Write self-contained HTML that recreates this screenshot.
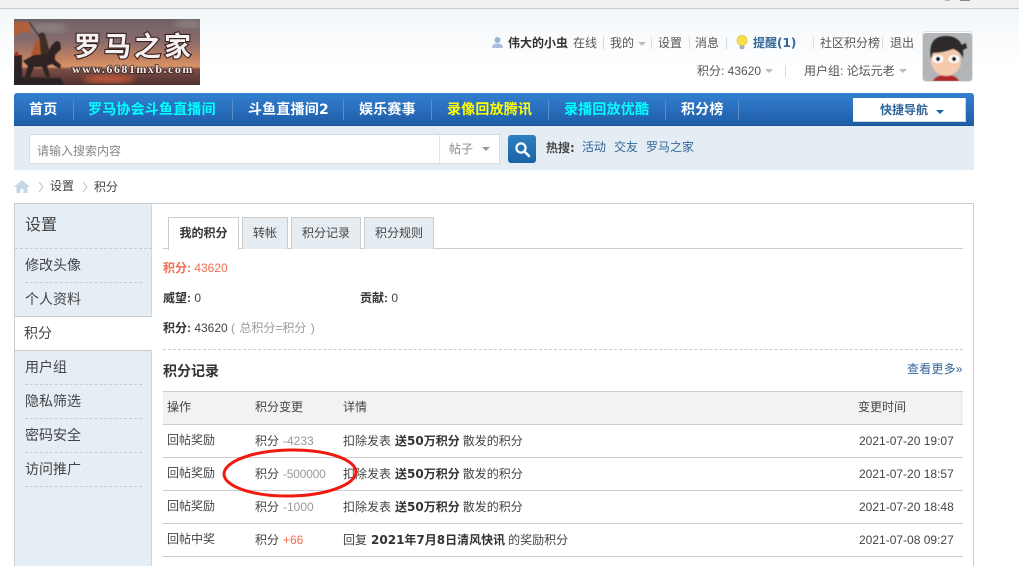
<!DOCTYPE html>
<html lang="zh">
<head>
<meta charset="utf-8">
<title>积分</title>
<style>
html,body{margin:0;padding:0;width:1019px;height:566px;overflow:hidden;background:#fff}
body{font-family:"Liberation Sans","WenQuanYi Zen Hei","Noto Sans CJK SC",sans-serif;font-size:12px;color:#444}
#root{position:relative;width:1019px;height:566px;overflow:hidden}
.a{position:absolute}
.t{position:absolute;white-space:nowrap;line-height:16px}
.n{font-size:14px;font-weight:bold;color:#fff;letter-spacing:.2px;font-family:"DejaVu Sans","WenQuanYi Zen Hei","Noto Sans CJK SC",sans-serif}
.s{font-size:14px;color:#444;left:25px}
.d{position:absolute;border-top:1px dashed #ccc;height:0}
.v{position:absolute;width:1px;height:12px;background:#cfd9e3}
.nv{position:absolute;top:100px;width:1px;height:20px;background:#5b8fca}
.tab{position:absolute;top:217px;height:31px;background:#e5edf2;border:1px solid #ccc;border-bottom:0;line-height:30px;text-align:center;color:#444}
.h{position:absolute;left:163px;width:800px;height:1px;background:#ccc}
.tri{position:absolute;width:0;height:0;border-left:4px solid transparent;border-right:4px solid transparent;border-top:4px solid #bbb}
b{color:#333;font-family:"DejaVu Sans","WenQuanYi Zen Hei","Noto Sans CJK SC",sans-serif}
.g{color:#999}
.c{margin-left:4px}
</style>
</head>
<body>
<div id="root">
<div class="a" style="left:0;top:0;width:1019px;height:8px;background:#f1f1f1"></div>
<div class="a" style="left:0;top:8px;width:1019px;height:1px;background:#ccc"></div>
<div class="a" style="left:0;top:9px;width:1019px;height:60px;background:linear-gradient(#f3f7fa,#fff)"></div>
<div class="a" style="left:945px;top:0;width:5px;height:1px;background:#bbb"></div>
<div class="a" style="left:960px;top:0;width:10px;height:1px;background:#888"></div>

<!-- logo -->
<svg class="a" style="left:14px;top:19px" width="186" height="66" viewBox="0 0 186 66">
<defs>
<linearGradient id="sky" x1="0" y1="0" x2="0" y2="1">
<stop offset="0" stop-color="#6e6268"/><stop offset=".35" stop-color="#8a6c6c"/><stop offset=".58" stop-color="#c08060"/><stop offset=".72" stop-color="#d89468"/><stop offset=".76" stop-color="#7a4c44"/><stop offset="1" stop-color="#4e3030"/></linearGradient>
<filter id="bl"><feGaussianBlur stdDeviation=".5"/></filter>
<filter id="bl2"><feGaussianBlur stdDeviation="3"/></filter>
</defs>
<rect width="186" height="66" fill="url(#sky)"/>
<ellipse cx="35" cy="9" rx="18" ry="5" fill="#8c8080" filter="url(#bl2)"/>
<ellipse cx="175" cy="5" rx="14" ry="4" fill="#8d8080" filter="url(#bl2)"/>
<ellipse cx="95" cy="60" rx="26" ry="4" fill="#c4583a" filter="url(#bl2)"/>
<g filter="url(#bl)">
<path d="M0 3L15 3L17 14L6 13L0 18Z" fill="#b0603a"/>
<path d="M15 3L27 20" stroke="#2a2020" stroke-width="1"/>
<path d="M17 36L22 21L28 18L31 30L27 38Z" fill="#b0562e"/>
<path d="M25 15Q28 12 31 15L35 30L34 37L27 37Z" fill="#3c2e28"/>
<path d="M11 58L14 47L9 42L20 36L33 35L37 27L42 22L46 23L47 30L41 36L41 41L47 46L46 50L38 45L33 47L36 58L32 58L28 48L20 48L16 58Z" fill="#2e2422"/>
<path d="M0 36H8V58H0Z" fill="#2a2428"/>
<rect x="1" y="33" width="3" height="4" fill="#a02828"/>
<path d="M0 66V58L46 59L50 66Z" fill="#2a2220"/>
</g>
<text x="60" y="37" font-size="27" font-weight="bold" fill="#f6f2f2" stroke="#3a2020" stroke-width="2.2" paint-order="stroke" font-family="'Noto Sans CJK SC',sans-serif" letter-spacing="3">罗马之家</text>
<text x="58" y="54" font-size="12" font-weight="bold" fill="#f3ece6" stroke="#3a2020" stroke-width="1.4" paint-order="stroke" font-family="'Liberation Serif',serif" letter-spacing="1.5">www.6681mxb.com</text>
</svg>

<!-- user bar -->
<svg class="a" style="left:491px;top:36px" width="13" height="13" viewBox="0 0 13 13"><circle cx="6.5" cy="4" r="3" fill="#9ab5d3"/><path d="M1 12Q1 8 5 7.5H8Q12 8 12 12Z" fill="#a9c0da"/></svg>
<span class="t" style="left:508px;top:35px"><b>伟大的小虫</b></span>
<span class="t" style="left:573px;top:35px;color:#555">在线</span>
<i class="v" style="left:603px;top:37px"></i>
<span class="t" style="left:610px;top:35px;color:#555">我的</span>
<i class="tri" style="left:638px;top:42px"></i>
<i class="v" style="left:651px;top:37px;background:#ddd"></i>
<span class="t" style="left:658px;top:35px;color:#555">设置</span>
<i class="v" style="left:689px;top:37px;background:#ddd"></i>
<span class="t" style="left:695px;top:35px;color:#555">消息</span>
<i class="v" style="left:726px;top:37px"></i>
<svg class="a" style="left:735px;top:35px" width="14" height="15" viewBox="0 0 14 15"><circle cx="7" cy="5.5" r="5" fill="#fbe04a" stroke="#e6bf2c" stroke-width=".7"/><rect x="4.5" y="10.5" width="5" height="3.5" rx="1" fill="#aab0b8"/></svg>
<span class="t" style="left:753px;top:35px"><b style="color:#369">提醒(1)</b></span>
<i class="v" style="left:813px;top:37px;background:#ddd"></i>
<span class="t" style="left:820px;top:35px;color:#555">社区积分榜</span>
<i class="v" style="left:882px;top:37px;background:#ddd"></i>
<span class="t" style="left:890px;top:35px;color:#555">退出</span>
<span class="t" style="left:697px;top:63px;color:#555">积分: 43620</span>
<i class="tri" style="left:765px;top:69px"></i>
<i class="v" style="left:785px;top:65px"></i>
<span class="t" style="left:804px;top:63px;color:#555">用户组: 论坛元老</span>
<i class="tri" style="left:899px;top:69px"></i>

<!-- avatar -->
<div class="a" style="left:922px;top:31px;width:51px;height:51px;border:1px solid #e2e2e2;border-radius:4px;background:#fff;box-sizing:border-box"></div>
<svg class="a" style="left:923px;top:33px;border-radius:3px" width="49" height="48" viewBox="0 0 49 48">
<defs><filter id="ab"><feGaussianBlur stdDeviation=".4"/></filter></defs>
<rect width="49" height="48" fill="#b2b6b8"/>
<g filter="url(#ab)">
<path d="M10 48Q13 42 23 42Q33 42 36 48Z" fill="#b3262a"/>
<ellipse cx="23" cy="28" rx="15" ry="15" fill="#f4c9ac"/>
<path d="M8 26Q4 3 23 3Q42 3 40 25Q38 19 30 16Q20 20 10 20Z" fill="#2f2b2b"/>
<path d="M38 12L43 10L44 15L40 17Z" fill="#2f2b2b"/>
<ellipse cx="15" cy="26" rx="5.5" ry="4" fill="#fff"/><ellipse cx="31" cy="26" rx="5.5" ry="4" fill="#fff"/>
<circle cx="15" cy="26" r="2.2" fill="#111"/><circle cx="31" cy="26" r="2.2" fill="#111"/>
</g>
</svg>

<!-- nav -->
<div class="a" style="left:14px;top:93px;width:960px;height:33px;background:linear-gradient(#3380d0,#1f5da8);border-radius:3px 3px 0 0;border-bottom:1px solid #1c5596;box-sizing:border-box"></div>
<span class="t n" style="left:29px;top:102px">首页</span>
<i class="nv" style="left:73px"></i>
<span class="t n" style="left:88px;top:102px;color:#0ff">罗马协会斗鱼直播间</span>
<i class="nv" style="left:232px"></i>
<span class="t n" style="left:248px;top:102px">斗鱼直播间2</span>
<i class="nv" style="left:343px"></i>
<span class="t n" style="left:359px;top:102px">娱乐赛事</span>
<i class="nv" style="left:431px"></i>
<span class="t n" style="left:447px;top:102px;color:#ff0">录像回放腾讯</span>
<i class="nv" style="left:548px"></i>
<span class="t n" style="left:564px;top:102px;color:#0ff">录播回放优酷</span>
<i class="nv" style="left:665px"></i>
<span class="t n" style="left:681px;top:102px">积分榜</span>
<i class="nv" style="left:738px"></i>
<div class="a" style="left:853px;top:98px;width:113px;height:24px;background:#fff;border-bottom:1px solid #cfd9e3;border-right:1px solid #cfd9e3;box-sizing:border-box"></div>
<span class="t" style="left:880px;top:102px"><b style="color:#369">快捷导航</b></span>
<i class="tri" style="left:936px;top:110px;border-top-color:#1f5da8"></i>

<!-- search -->
<div class="a" style="left:14px;top:126px;width:960px;height:44px;background:#e5edf4"></div>
<div class="a" style="left:29px;top:134px;width:471px;height:30px;background:#fff;border:1px solid #d3dde5;box-sizing:border-box"></div>
<div class="a" style="left:439px;top:135px;width:1px;height:28px;background:#dde4ea"></div>
<span class="t" style="left:37px;top:143px;color:#888">请输入搜索内容</span>
<span class="t" style="left:449px;top:141px;color:#888">帖子</span>
<i class="tri" style="left:482px;top:147px;border-top-color:#999"></i>
<div class="a" style="left:508px;top:135px;width:28px;height:28px;border-radius:3px;background:linear-gradient(#2f80c2,#1a62a6)"></div>
<svg class="a" style="left:508px;top:135px" width="28" height="28" viewBox="0 0 28 28"><circle cx="13" cy="13" r="4.6" fill="none" stroke="#fff" stroke-width="2.2"/><path d="M16.5 16.5L21 21" stroke="#fff" stroke-width="2.4" stroke-linecap="round"/></svg>
<span class="t" style="left:546px;top:140px"><b style="color:#444">热搜:</b></span>
<span class="t" style="left:582px;top:139px;color:#369">活动</span>
<span class="t" style="left:614px;top:139px;color:#369">交友</span>
<span class="t" style="left:646px;top:139px;color:#369">罗马之家</span>

<!-- breadcrumb -->
<svg class="a" style="left:14px;top:180px" width="16" height="13" viewBox="0 0 16 13"><path d="M8 0L16 7H13.5V13H9.5V9H6.5V13H2.5V7H0Z" fill="#c5d8e8"/></svg>
<svg class="a" style="left:38px;top:181px" width="6" height="12" viewBox="0 0 6 12"><path d="M1 1L5 6L1 11" fill="none" stroke="#bbb"/></svg>
<span class="t" style="left:50px;top:178px">设置</span>
<svg class="a" style="left:82px;top:181px" width="6" height="12" viewBox="0 0 6 12"><path d="M1 1L5 6L1 11" fill="none" stroke="#bbb"/></svg>
<span class="t" style="left:94px;top:179px">积分</span>

<!-- frame -->
<div class="a" style="left:14px;top:203px;width:960px;height:370px;border:1px solid #ccc;box-sizing:border-box;background:#fff"></div>
<div class="a" style="left:15px;top:204px;width:137px;height:362px;background:#e5edf5;border-right:1px solid #ccd6de;box-sizing:border-box"></div>
<span class="t" style="left:25px;top:217px;font-size:16px;line-height:18px;color:#444">设置</span>
<div class="d" style="left:15px;top:248px;width:137px"></div>
<span class="t s" style="top:257px">修改头像</span>
<div class="d" style="left:25px;top:282px;width:117px"></div>
<span class="t s" style="top:291px">个人资料</span>
<div class="a" style="left:15px;top:316px;width:137px;height:35px;background:#fff;border-top:1px solid #ccc;border-bottom:1px solid #ccc;box-sizing:border-box"></div>
<span class="t s" style="top:325px;left:24px">积分</span>
<span class="t s" style="top:359px">用户组</span>
<div class="d" style="left:25px;top:384px;width:117px"></div>
<span class="t s" style="top:393px">隐私筛选</span>
<div class="d" style="left:25px;top:418px;width:117px"></div>
<span class="t s" style="top:427px">密码安全</span>
<div class="d" style="left:25px;top:452px;width:117px"></div>
<span class="t s" style="top:461px">访问推广</span>
<div class="d" style="left:25px;top:486px;width:117px"></div>

<!-- tabs -->
<div class="h" style="top:248px"></div>
<div class="tab" style="left:168px;width:69px;height:32px;background:#fff"><b>我的积分</b></div>
<div class="tab" style="left:242px;width:44px">转帐</div>
<div class="tab" style="left:291px;width:68px">积分记录</div>
<div class="tab" style="left:364px;width:68px">积分规则</div>

<span class="t" style="left:163px;top:260px;color:#f26c4f"><span style="font-weight:bold">积分:</span> 43620</span>
<span class="t" style="left:163px;top:290px"><span style="font-weight:bold;color:#333">威望:</span> 0</span>
<span class="t" style="left:360px;top:290px"><span style="font-weight:bold;color:#333">贡献:</span> 0</span>
<span class="t" style="left:163px;top:320px"><span style="font-weight:bold;color:#333">积分:</span> 43620 <span class="g" style="word-spacing:1px">( 总积分=积分 )</span></span>
<div class="d" style="left:163px;top:349px;width:800px"></div>

<span class="t" style="left:163px;top:363px;font-size:14px;font-weight:bold;color:#333">积分记录</span>
<span class="t" style="left:907px;top:361px;color:#369;letter-spacing:.2px">查看更多»</span>

<!-- table -->
<div class="a" style="left:163px;top:391px;width:800px;height:33px;background:#f2f2f2"></div>
<div class="h" style="top:391px"></div>
<div class="h" style="top:424px"></div>
<div class="h" style="top:457px"></div>
<div class="h" style="top:490px"></div>
<div class="h" style="top:523px"></div>
<div class="h" style="top:556px"></div>

<span class="t" style="left:167px;top:399px">操作</span>
<span class="t" style="left:255px;top:399px">积分变更</span>
<span class="t" style="left:343px;top:399px">详情</span>
<span class="t" style="left:858px;top:399px">变更时间</span>

<span class="t" style="left:167px;top:432px">回帖奖励</span>
<span class="t" style="left:255px;top:433px">积分</span><span class="t g" style="left:283px;top:433px">-4233</span>
<span class="t" style="left:343px;top:433px">扣除发表<b class="c">送50万积分</b><span class="c" style="margin-left:3px">散发的积分</span></span>
<span class="t" style="left:859px;top:433px">2021-07-20 19:07</span>

<span class="t" style="left:167px;top:465px">回帖奖励</span>
<span class="t" style="left:255px;top:466px">积分</span><span class="t g" style="left:283px;top:466px;letter-spacing:-.2px">-500000</span>
<span class="t" style="left:343px;top:466px">扣除发表<b class="c">送50万积分</b><span class="c" style="margin-left:3px">散发的积分</span></span>
<span class="t" style="left:859px;top:466px">2021-07-20 18:57</span>

<span class="t" style="left:167px;top:498px">回帖奖励</span>
<span class="t" style="left:255px;top:499px">积分</span><span class="t g" style="left:283px;top:499px">-1000</span>
<span class="t" style="left:343px;top:499px">扣除发表<b class="c">送50万积分</b><span class="c" style="margin-left:3px">散发的积分</span></span>
<span class="t" style="left:859px;top:499px">2021-07-20 18:48</span>

<span class="t" style="left:167px;top:531px">回帖中奖</span>
<span class="t" style="left:255px;top:532px">积分</span><span class="t" style="left:283px;top:532px;color:#f26c4f">+66</span>
<span class="t" style="left:343px;top:532px">回复<b class="c">2021年7月8日清风快讯</b><span class="c" style="margin-left:3px">的奖励积分</span></span>
<span class="t" style="left:859px;top:532px">2021-07-08 09:27</span>

<!-- annotation -->
<svg class="a" style="left:215px;top:440px" width="150" height="66" viewBox="0 0 150 66">
<ellipse cx="75" cy="33" rx="66" ry="23" fill="none" stroke="#f01a10" stroke-width="3" transform="rotate(-1 75 33)"/>
</svg>
</div>
</body>
</html>
